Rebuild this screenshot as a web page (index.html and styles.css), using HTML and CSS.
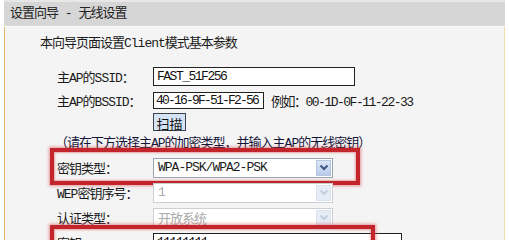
FILE: index.html
```html
<!DOCTYPE html>
<html lang="zh-CN">
<head>
  <meta charset="UTF-8" />
  <title>设置向导 - 无线设置</title>
  <link rel="stylesheet" href="styles.css">
</head>
<body>
  <div class="wizard">
    <div class="wizard-head">设置向导 - 无线设置</div>
    <div class="wizard-body">
      <div class="intro">本向导页面设置Client模式基本参数</div>

      <div class="row">
        <span class="label">主AP的SSID：</span>
        <input class="text ssid" type="text" value="FAST_51F256">
      </div>
      <div class="row">
        <span class="label">主AP的BSSID：</span>
        <input class="text bssid" type="text" value="40-16-9F-51-F2-56">
        <span class="hint">例如：00-1D-0F-11-22-33</span>
      </div>
      <div class="row row-btn">
        <span class="label"></span>
        <button class="scan">扫描</button>
      </div>

      <div class="note">（请在下方选择主AP的加密类型，并输入主AP的无线密钥）</div>

      <div class="row field">
        <span class="mark mark-type"></span>
        <span class="label">密钥类型：</span>
        <div class="select">
          <span class="value">WPA-PSK/WPA2-PSK</span>
          <span class="arrow"><svg width="10" height="7" viewBox="0 0 10 7"><path d="M1.5 1.5 L5 5 L8.5 1.5" fill="none" stroke="currentColor" stroke-width="2"/></svg></span>
        </div>
      </div>
      <div class="row field">
        <span class="label">WEP密钥序号：</span>
        <div class="select disabled">
          <span class="value">1</span>
          <span class="arrow"><svg width="10" height="7" viewBox="0 0 10 7"><path d="M1.5 1.5 L5 5 L8.5 1.5" fill="none" stroke="currentColor" stroke-width="2"/></svg></span>
        </div>
      </div>
      <div class="row field">
        <span class="label">认证类型：</span>
        <div class="select disabled">
          <span class="value">开放系统</span>
          <span class="arrow"><svg width="10" height="7" viewBox="0 0 10 7"><path d="M1.5 1.5 L5 5 L8.5 1.5" fill="none" stroke="currentColor" stroke-width="2"/></svg></span>
        </div>
      </div>
      <div class="row field">
        <span class="mark mark-key"></span>
        <span class="label">密钥：</span>
        <input class="text key" type="text" value="11111111">
      </div>
    </div>
  </div>
</body>
</html>
```

FILE: styles.css
```css
html, body { margin: 0; padding: 0; background: #fff; overflow: hidden; }
body { font-family: "Liberation Mono", "Noto Sans CJK SC", monospace; font-size: 13px; letter-spacing: -1px; color: #1b1b1b; }

.wizard { margin-left: 4px; width: 501px; }
.wizard-head { border-top: 2px solid #e7e7e7; border-bottom: 1px solid #fbfbfb; background: #d6d6d6; height: 24px; line-height: 24px; padding-left: 6px; color: #222; }
.wizard-body { background: #f4f4f4; border-left: 1px solid #e3b666; border-right: 1px solid #f1dba6; height: 240px; }

.intro { padding: 7px 0 0 35px; height: 20px; line-height: 20px; }

.row { display: flex; align-items: center; height: 24px; padding-left: 52px; position: relative; }
.row:nth-child(2) { margin-top: 10px; }
.label { width: 96px; flex: none; white-space: nowrap; }

.text { box-sizing: border-box; height: 19px; border: 1px solid #222; background: #fff; padding: 0 3px; font: inherit; letter-spacing: -1.5px; color: #111; outline: none; }
.ssid { width: 202px; }
.bssid { width: 111px; height: 17px; padding: 0 2px; letter-spacing: -1.8px; }
.key { width: 249px; height: 20px; }
.hint { margin-left: 7px; letter-spacing: -1.5px; white-space: nowrap; }

.row-btn { height: 20px; }
.scan { box-sizing: border-box; height: 18px; width: 33px; padding: 0; border: 1px solid #3c4250; background: #d5e4f4; font: inherit; color: #111; }

.note { padding-left: 50px; height: 23px; line-height: 23px; color: #14143a; white-space: nowrap; }

.field { height: 25px; }
.select { box-sizing: border-box; width: 180px; height: 20px; border: 1px solid #9aa3ae; background: #fff; display: flex; align-items: center; }
.select .value { flex: 1; padding-left: 4px; white-space: nowrap; }
.select .arrow { width: 15px; height: 16px; margin-right: 1px; display: flex; align-items: center; justify-content: center; background: linear-gradient(#dbe6f6, #b9cce9); border: 1px solid #b3c5e2; color: #3f5580; box-sizing: border-box; }
.select.disabled { border-color: #ccd0d4; color: #aaa; }
.select.disabled .arrow { background: #e6edf7; border-color: #dbe3ef; color: #c3cddd; }

.mark { position: absolute; box-sizing: border-box; border: 4px solid #c2252b; box-shadow: 0 0 3px 1px rgba(214, 70, 70, .55), inset 0 0 2px 1px rgba(214, 70, 70, .45); }
.mark-type { left: 45px; top: -7px; width: 310px; height: 37px; }
.mark-key { left: 45px; top: -5px; width: 325px; height: 40px; }
```
